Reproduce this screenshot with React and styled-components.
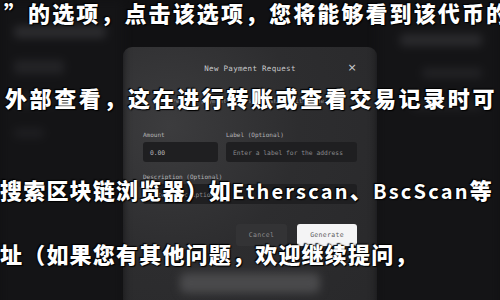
import styled, { createGlobalStyle } from "styled-components";

const Global = createGlobalStyle`
	html, body {
		margin: 0;
		padding: 0;
		background: #111113;
	}
	* {
		box-sizing: border-box;
	}
`;

const Page = styled.div`
	position: relative;
	width: 500px;
	height: 300px;
	overflow: hidden;
	background: #111113;
	display: grid;
	grid-template-columns: 123px 254px 123px;
	font-family: "DejaVu Sans Mono", "Liberation Mono", monospace;
`;

const Side = styled.div`
	background: ${(props) => props.bg || "#151517"};
	display: flex;
	flex-direction: column;
	gap: 22px;
	padding: ${(props) => props.pad || "26px 12px"};
	filter: blur(4px);
`;

const Blob = styled.div`
	width: ${(props) => props.w};
	height: ${(props) => props.h || "10px"};
	background: ${(props) => props.c || "#2b2b2e"};
	border-radius: 4px;
	align-self: ${(props) => props.align || "flex-start"};
`;

const Modal = styled.div`
	margin-top: 47px;
	height: 280px;
	border-radius: 9px;
	background: radial-gradient(
		circle at 18% 28%,
		#3c3c3e 0%,
		#2d2d2f 45%,
		#28282a 100%
	);
	padding: 14px 20px 0;
	display: flex;
	flex-direction: column;
`;

const Header = styled.div`
	position: relative;
	display: flex;
	justify-content: center;
	align-items: center;
	height: 14px;
	font-size: 7.5px;
	letter-spacing: 0.3px;
	color: #c9c9cb;
`;

const Close = styled.span`
	position: absolute;
	right: 0;
	top: 0;
	font-family: "DejaVu Sans", sans-serif;
	font-size: 11px;
	line-height: 14px;
	color: #d0d0d2;
`;

const Sub = styled.div`
	margin-top: 22px;
	text-align: center;
	font-size: 6px;
	color: #8a8a8c;
	white-space: nowrap;
`;

const Row = styled.div`
	display: grid;
	grid-template-columns: ${(props) => props.cols || "1fr"};
	gap: 8px;
	margin-top: ${(props) => props.mt || "0"};
`;

const Field = styled.div`
	display: flex;
	flex-direction: column;
	gap: 4px;
	min-width: 0;
`;

const Label = styled.div`
	font-size: 6px;
	color: #b5b5b7;
	height: 6px;
	line-height: 6px;
	white-space: nowrap;
`;

const Input = styled.div`
	height: 20px;
	border-radius: 3px;
	background: #1f1f21;
	padding: 0 7px;
	display: flex;
	align-items: center;
	font-size: 6.3px;
	white-space: nowrap;
	overflow: hidden;
	color: ${(props) => (props.$muted ? "#8a8a8c" : "#bdbdbf")};
`;

const Actions = styled.div`
	display: flex;
	justify-content: flex-end;
	gap: 10px;
	margin-top: 20px;
`;

const Button = styled.div`
	width: ${(props) => props.w};
	height: 22px;
	border-radius: 3px;
	display: flex;
	align-items: center;
	justify-content: center;
	font-size: 6.5px;
	letter-spacing: 0.3px;
	background: ${(props) => (props.$primary ? "#f4f4f5" : "#333335")};
	color: ${(props) => (props.$primary ? "#5a5a5c" : "#8d8d8f")};
`;

const Footer = styled.div`
	margin: 27px auto 0;
	width: 140px;
	height: 20px;
	border-radius: 6px;
	background: #4a4a4c;
	filter: blur(4px);
`;

const Overlay = styled.div`
	position: absolute;
	left: 0;
	top: ${(props) => props.top};
	padding-left: ${(props) => props.left || "0"};
	white-space: nowrap;
	font-family: "Noto Sans CJK SC", "Noto Sans", sans-serif;
	font-weight: 900;
	font-size: 22px;
	line-height: 24px;
	letter-spacing: ${(props) => props.ls || "2px"};
	color: #ffffff;
	text-shadow:
		0 0 2px #000,
		1px 1px 1px #000,
		-1px -1px 1px #000;
`;

const Latin = styled.span`
	letter-spacing: 2.2px;
	font-size: 20px;
	font-weight: 700;
`;

export default function App() {
	return (
		<>
			<Global />
			<Page>
				<Side pad="26px 14px" bg="#141416">
					<Blob w="92px" h="12px" c="#2c2c2f" />
					<Blob w="50px" h="14px" c="#232326" />
					<Blob w="40px" h="10px" c="#202023" />
					<Blob w="30px" h="10px" c="#1e1e21" />
				</Side>
				<Modal>
					<Header>
						New Payment Request
						<Close>×</Close>
					</Header>
					<Sub>Create a payment request to share with others</Sub>
					<Row cols="75px 131px" mt="28px">
						<Field>
							<Label>Amount</Label>
							<Input>0.00</Input>
						</Field>
						<Field>
							<Label>Label (Optional)</Label>
							<Input $muted>Enter a label for the address</Input>
						</Field>
					</Row>
					<Row mt="12px">
						<Field>
							<Label>Description (Optional)</Label>
							<Input $muted>Enter description</Input>
						</Field>
					</Row>
					<Actions>
						<Button w="51px">Cancel</Button>
						<Button w="60px" $primary>
							Generate
						</Button>
					</Actions>
					<Footer />
				</Modal>
				<Side pad="34px 18px" bg="#141416">
					<Blob w="82px" h="12px" c="#2a2a2d" align="flex-end" />
					<Blob w="60px" h="10px" c="#222225" align="flex-end" />
					<Blob w="70px" h="10px" c="#1f1f22" align="flex-end" />
				</Side>

				<Overlay top="0px" left="4px" ls="2.1px">
					”的选项，点击该选项，您将能够看到该代币的
				</Overlay>
				<Overlay top="85px" left="5px" ls="2.6px">
					外部查看，这在进行转账或查看交易记录时可
				</Overlay>
				<Overlay top="177px" left="0px" ls="1.2px">
					搜索区块链浏览器）如<Latin>Etherscan</Latin>、<Latin>BscScan</Latin>等
				</Overlay>
				<Overlay top="241px" left="0px" ls="1.2px">
					址（如果您有其他问题，欢迎继续提问，
				</Overlay>
			</Page>
		</>
	);
}
